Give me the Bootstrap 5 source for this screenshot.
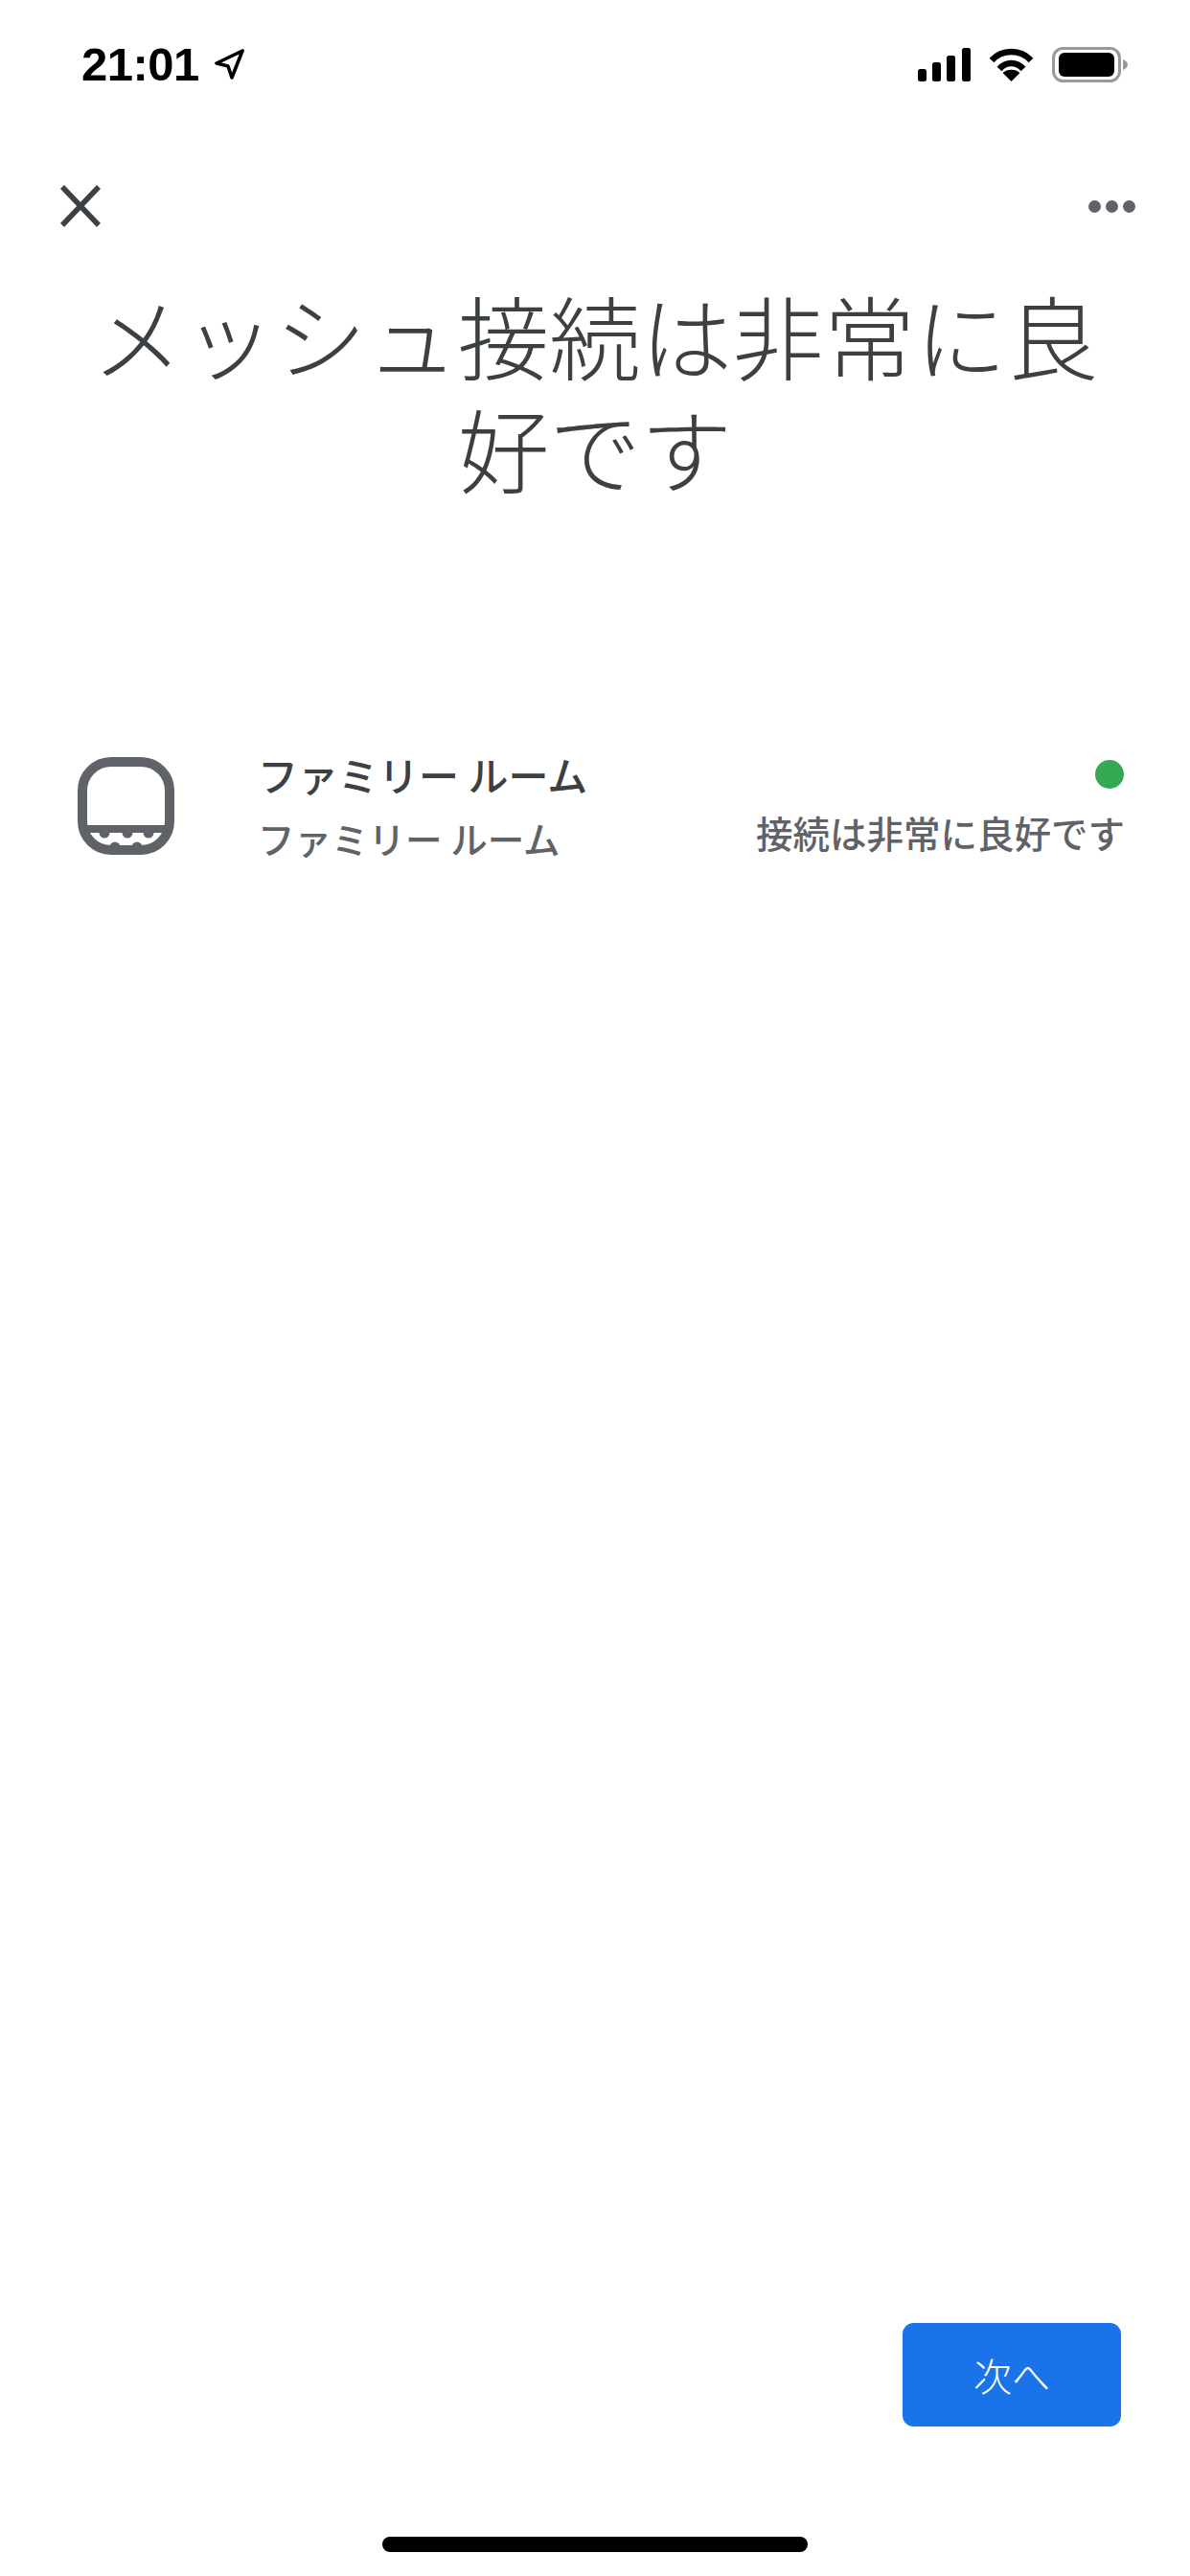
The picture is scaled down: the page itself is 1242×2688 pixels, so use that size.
<!DOCTYPE html>
<html lang="ja">
<head>
    <meta charset="UTF-8">
    <meta name="viewport" content="width=device-width, initial-scale=1.0">
    <title>メッシュ接続</title>
    <link rel="stylesheet" href="https://cdn.jsdelivr.net/npm/bootstrap@5.3.0/dist/css/bootstrap.min.css">
    <style>
        body {
            background-color: #fff;
            font-family: "Noto Sans CJK JP", "Liberation Sans", sans-serif;
        }
        .screen {
            height: 2688px;
            width: 1242px;
        }
        .status-bar {
            height: 36px;
            margin-top: 49px;
            padding: 0 65px 0 85px;
        }
        .clock {
            font-family: "Liberation Sans", sans-serif;
            font-weight: 700;
            font-size: 49px;
            line-height: 36px;
            color: #000;
            letter-spacing: -0.5px;
        }
        .status-icons { gap: 19px; }
        .tool-row {
            margin-top: 108px;
            height: 44px;
            padding: 0 57px 0 63px;
        }
        .page-title {
            margin: 53px 60px 0;
            font-size: 95.5px;
            line-height: 118px;
            font-weight: 300;
            color: #3c4043;
            letter-spacing: 0;
        }
        .device-row {
            margin-top: 260px;
            padding: 0 69px 0 81px;
        }
        .device-text { margin-left: 87px; }
        .device-name {
            font-size: 42px;
            line-height: 44px;
            font-weight: 500;
            color: #3c4043;
        }
        .device-room, .device-state {
            font-size: 38.5px;
            line-height: 44px;
            font-weight: 500;
            color: #5f6368;
            margin-top: 22px;
        }
        .status-dot {
            width: 30px;
            height: 30px;
            background: #34a853;
        }
        .device-state { margin-top: 23px; margin-right: -1px; }
        .bottom-row { padding: 0 72px 115px 0; }
        .next-btn {
            width: 228px;
            height: 108px;
            border-radius: 11px;
            background: #1a73e8;
            border-color: #1a73e8;
            font-size: 40px;
            font-weight: 300;
            padding: 0;
        }
        .home-bar {
            width: 444px;
            height: 16px;
            background: #000;
            margin-bottom: 25px;
        }
    </style>
</head>
<body class="m-0">

<div class="screen d-flex flex-column">
    <div class="status-bar d-flex justify-content-between align-items-center">
        <div class="d-flex align-items-center gap-3">
            <span class="clock">21:01</span>
            <svg width="31" height="32" viewBox="0 0 31 32" fill="none" stroke="#000" stroke-width="3.6" stroke-linejoin="round"><path d="M29 2 2 15l12 3 4 12z"/></svg>
        </div>
        <div class="status-icons d-flex align-items-center">
            <svg width="55" height="35" viewBox="0 0 55 35" fill="#000"><rect x="0" y="22" width="9" height="13" rx="2.5"/><rect x="15" y="15" width="9" height="20" rx="2.5"/><rect x="30" y="8" width="9" height="27" rx="2.5"/><rect x="46" y="0" width="9" height="35" rx="2.5"/></svg>
            <svg width="47" height="36" viewBox="0 0 47 36" fill="none" stroke="#000" stroke-width="6.5"><path d="M3 14C14 2 33 2 44 14"/><path d="M11 23C18 15 29 15 36 23"/><path d="M23.5 36 14.500 27C19 22.500 28 22.500 32.500 27z" fill="#000" stroke="none"/></svg>
            <svg width="79" height="37" viewBox="0 0 79 37"><rect x="1.500" y="1.500" width="69" height="34" rx="10" fill="none" stroke="#999" stroke-width="3"/><rect x="7" y="6" width="58" height="25" rx="6" fill="#000"/><path d="M74 13c3 1 5 3 5 5.500s-2 4.500-5 5.500z" fill="#999"/></svg>
        </div>
    </div>

    <div class="tool-row d-flex justify-content-between align-items-center">
        <svg width="42" height="44" viewBox="0 0 42 44" stroke="#3c4043" stroke-width="5.500"><path d="M2 2 40 42M40 2 2 42"/></svg>
        <svg width="49" height="13" viewBox="0 0 49 13" fill="#5f6368"><circle cx="6.500" cy="6.500" r="6.500"/><circle cx="24.500" cy="6.500" r="6.500"/><circle cx="42.500" cy="6.500" r="6.500"/></svg>
    </div>

    <h1 class="page-title text-center">メッシュ接続は非常に良好です</h1>

    <div class="device-row d-flex align-items-center">
        <svg width="101" height="102" viewBox="0 0 101 102" class="flex-shrink-0">
            <rect x="5" y="5" width="91" height="92" rx="30" fill="none" stroke="#5f6368" stroke-width="10"/>
            <path d="M5 75H96" stroke="#5f6368" stroke-width="8"/>
            <g fill="#5f6368"><circle cx="28" cy="79" r="5.500"/><circle cx="52" cy="79" r="5.500"/><circle cx="74" cy="79" r="5.500"/><circle cx="39" cy="94" r="5.500"/><circle cx="62" cy="94" r="5.500"/></g>
        </svg>
        <div class="device-text flex-grow-1">
            <div class="device-name">ファミリー ルーム</div>
            <div class="device-room">ファミリー ルーム</div>
        </div>
        <div class="d-flex flex-column align-items-end">
            <span class="status-dot rounded-circle d-block"></span>
            <div class="device-state">接続は非常に良好です</div>
        </div>
    </div>

    <div class="flex-grow-1"></div>

    <div class="bottom-row d-flex justify-content-end">
        <button type="button" class="btn btn-primary next-btn">次へ</button>
    </div>
    <div class="home-bar rounded-pill mx-auto"></div>
</div>

</body>
</html>
